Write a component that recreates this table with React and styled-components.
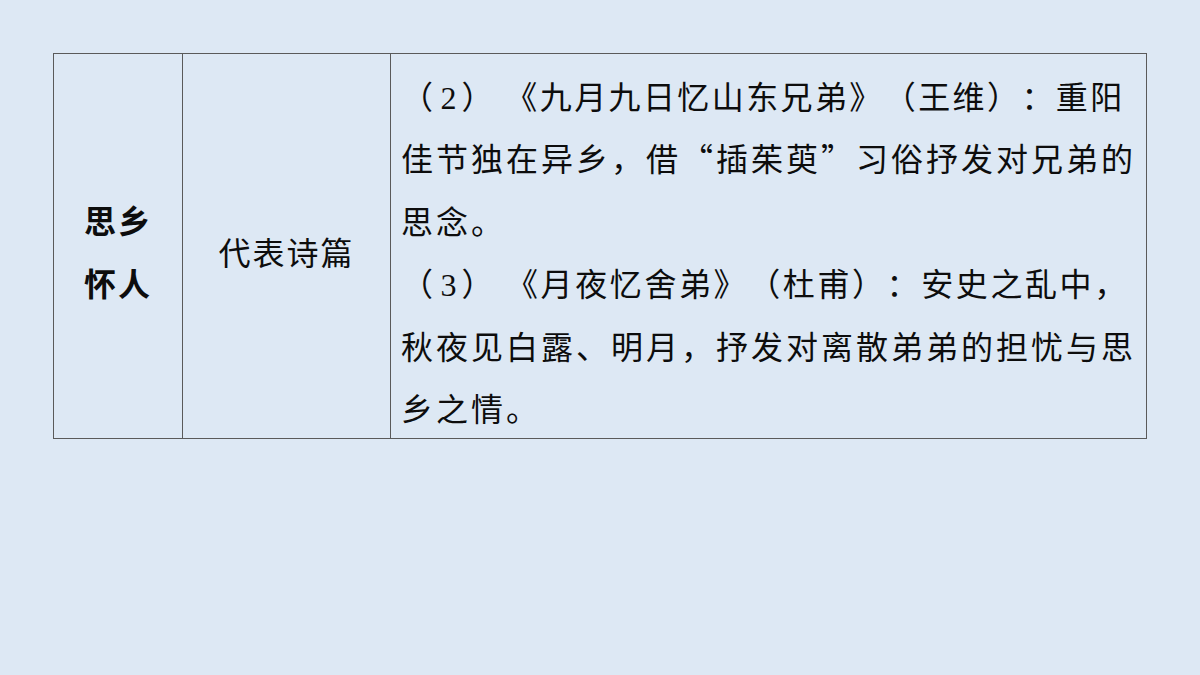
import React from "react";
import styled, { createGlobalStyle } from "styled-components";

const GlobalStyle = createGlobalStyle`
  html, body {
    margin: 0;
    padding: 0;
    background: #dde8f4;
  }
  body {
    width: 1200px;
    height: 675px;
    overflow: hidden;
    font-family: "Noto Sans CJK SC", "Noto Sans", sans-serif;
    color: #0d0d0d;
    text-spacing-trim: space-all;
  }
`;

const Page = styled.div`
  padding: 53px 53px 0 53px;
`;

const Table = styled.div`
  display: grid;
  grid-template-columns: 128px 208px 1fr;
  border: 1px solid #5a5a5a;
  width: 1094px;
  box-sizing: border-box;
`;

const Cell = styled.div`
  border-left: ${({ $first }) => ($first ? "none" : "1px solid #5a5a5a")};
  display: flex;
  flex-direction: column;
  justify-content: center;
  align-items: ${({ $center }) => ($center ? "center" : "stretch")};
  font-size: 32px;
  font-weight: ${({ $bold }) => ($bold ? 700 : 400)};
  padding: ${({ $center }) => ($center ? "10px 0 0 0" : "10px 10px 0 10px")};
  box-sizing: border-box;
`;

const CenterText = styled.div`
  text-align: center;
  line-height: 63px;
  letter-spacing: 2px;
`;

const Line = styled.div`
  white-space: nowrap;
  height: 62.4px;
  line-height: 62.4px;
  letter-spacing: ${({ $ls }) => $ls || "3px"};
`;

const Num = styled.span`
  font-family: "Liberation Serif", serif;
  letter-spacing: 0;
  padding: 0 5px;
`;

export default function App() {
  return (
    <>
      <GlobalStyle />
      <Page>
        <Table>
          <Cell $first $center $bold>
            <CenterText>
              思乡
              <br />
              怀人
            </CenterText>
          </Cell>
          <Cell $center>
            <CenterText>代表诗篇</CenterText>
          </Cell>
          <Cell>
            <Line $ls="2.4px">
              （<Num>2</Num>） 《九月九日忆山东兄弟》（王维）：重阳
            </Line>
            <Line>佳节独在异乡，借“插茱萸”习俗抒发对兄弟的</Line>
            <Line>思念。</Line>
            <Line $ls="2.6px">
              （<Num>3</Num>） 《月夜忆舍弟》（杜甫）：安史之乱中，
            </Line>
            <Line>秋夜见白露、明月，抒发对离散弟弟的担忧与思</Line>
            <Line>乡之情。</Line>
          </Cell>
        </Table>
      </Page>
    </>
  );
}
